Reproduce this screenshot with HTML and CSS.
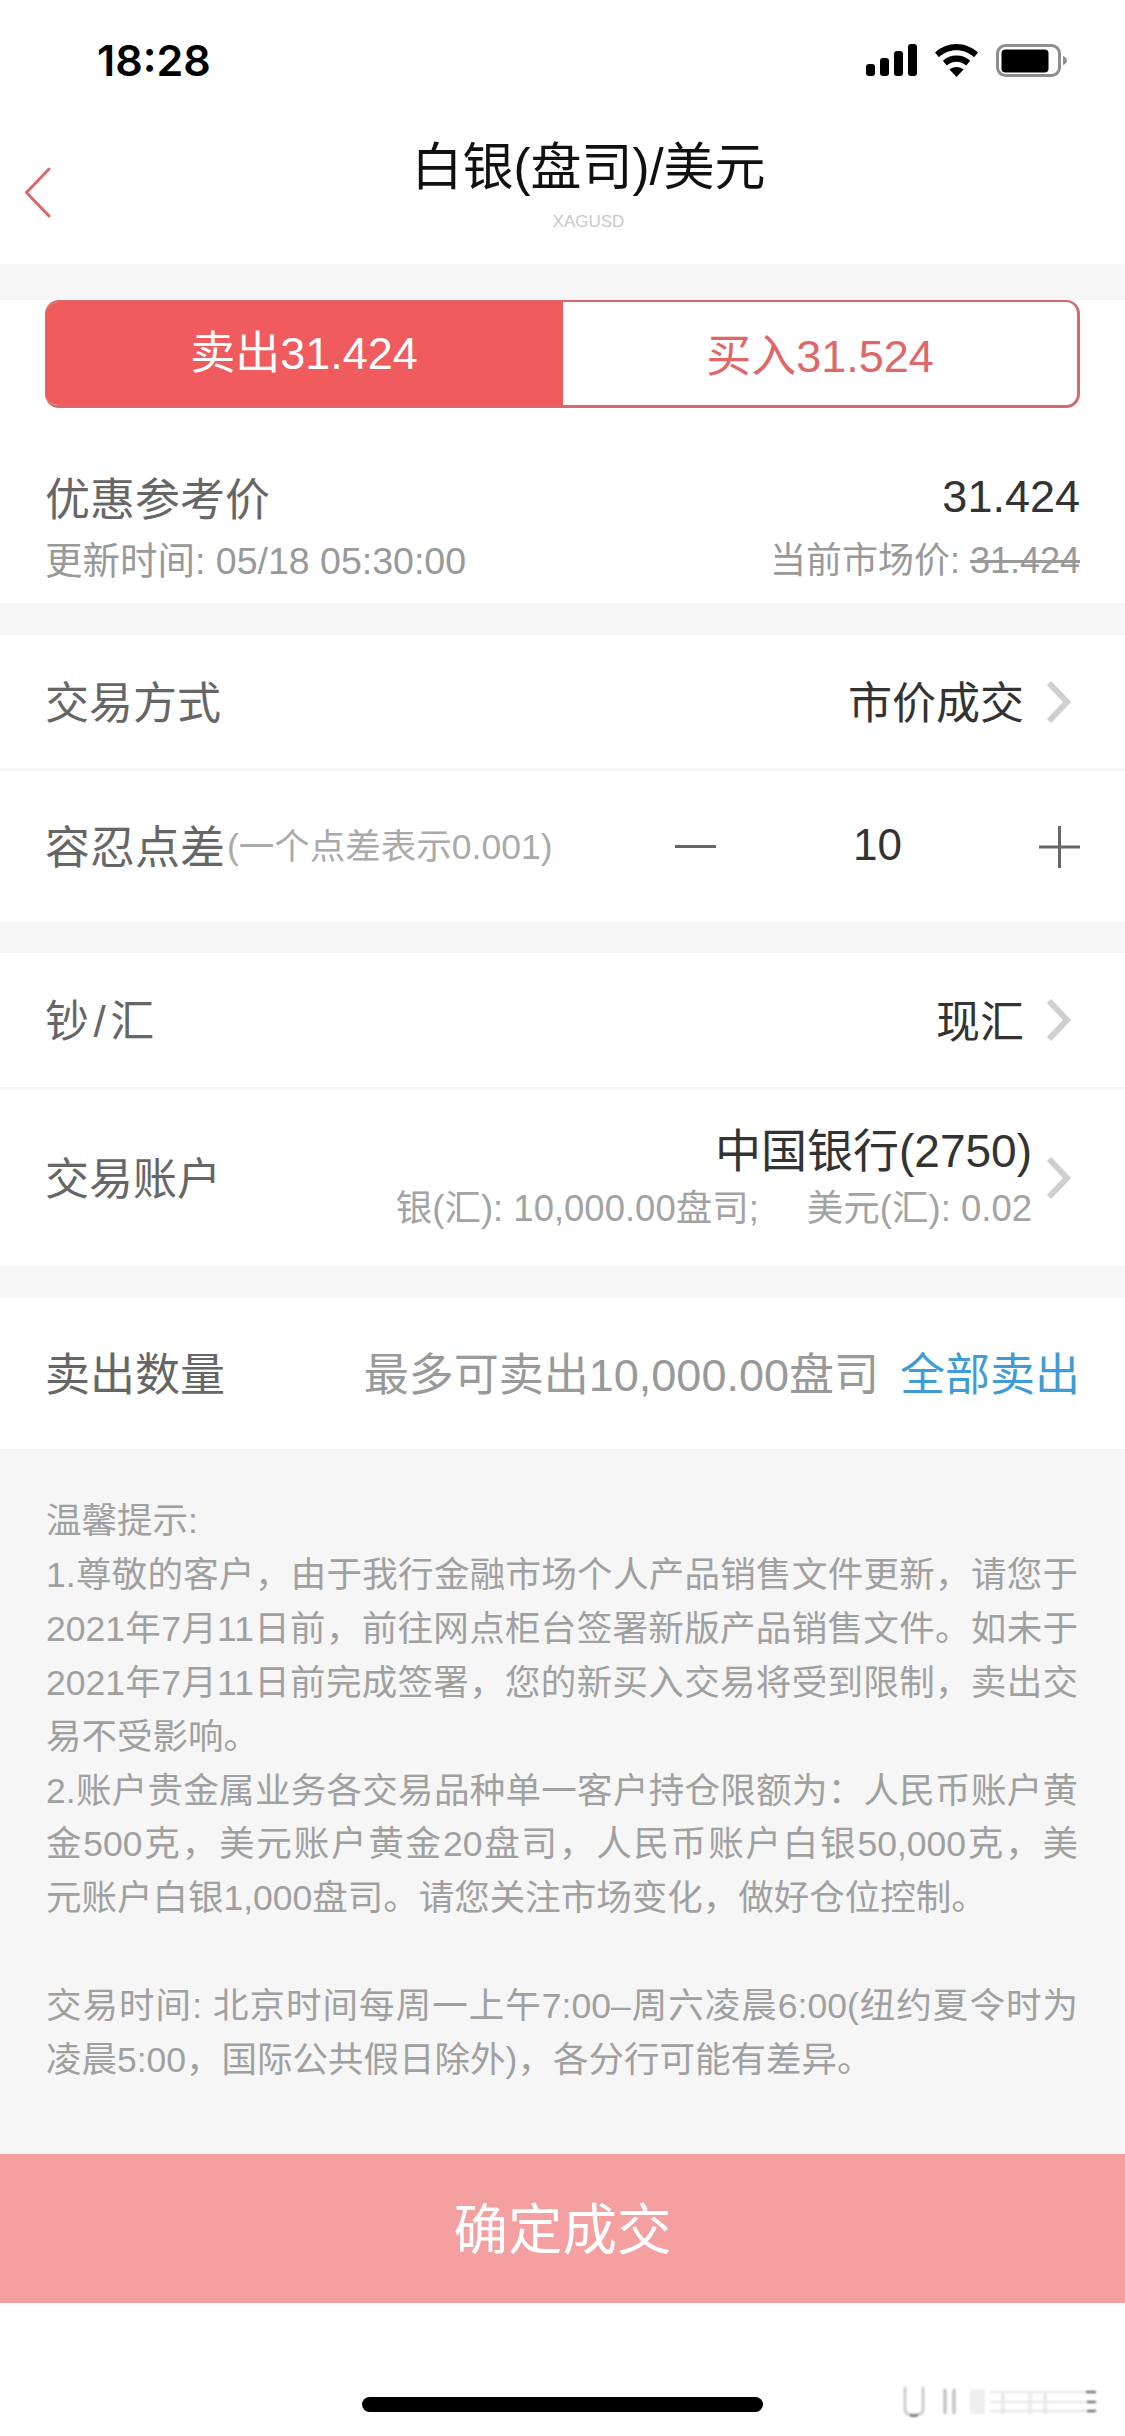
FILE: index.html
```html
<!DOCTYPE html>
<html lang="zh-CN">
<head>
<meta charset="utf-8">
<title>白银(盘司)/美元</title>
<link rel="stylesheet" href="styles.css">
</head>
<body>
<div class="page">
  <header class="header">
    <div class="status">
      <span class="time">18:28</span>
      <div class="status-icons">
        <svg class="signal" width="51" height="32" viewBox="0 0 51 32"><rect x="0" y="20" width="9" height="12" rx="3"/><rect x="14" y="14" width="9" height="18" rx="3"/><rect x="28" y="7" width="9" height="25" rx="3"/><rect x="42" y="0" width="9" height="32" rx="3"/></svg>
        <svg class="wifi" width="43" height="33" viewBox="0 0 43 33"><path d="M21.5 0C13.5 0 6 3 0 8.5l4 4.7C9 8.7 15 6.3 21.5 6.3S34 8.700 39 13.200l4-4.700C37 3 29.500 0 21.500 0Z"/><path d="M21.500 11.500c-5.200 0-10 1.900-13.700 5.300l4 4.700c2.700-2.300 6.100-3.700 9.700-3.700s7 1.400 9.700 3.700l4-4.700c-3.700-3.400-8.500-5.300-13.700-5.300Z"/><path d="M21.500 23c-2.800 0-5.200.9-7 2.500l7 7.500 7-7.500c-1.800-1.600-4.200-2.500-7-2.500Z"/></svg>
        <svg class="battery" width="71" height="33" viewBox="0 0 71 33"><rect x="1.500" y="1.500" width="62" height="30" rx="8" fill="none" stroke="#8e8e8e" stroke-width="3"/><rect x="5.500" y="5.500" width="47" height="23" rx="4"/><path d="M67 12c2.500 1 4 2.500 4 4.500s-1.500 3.500-4 4.500Z" fill="#8e8e8e"/></svg>
      </div>
    </div>
    <div class="nav">
      <svg class="back" width="27" height="51" viewBox="0 0 27 51"><path d="M25 2 2.500 25.500 25 49" fill="none" stroke="#d9696a" stroke-width="3" stroke-linecap="round" stroke-linejoin="round"/></svg>
      <div class="nav-title">
        <h1 class="title">白银(盘司)/美元</h1>
        <div class="subtitle">XAGUSD</div>
      </div>
    </div>
  </header>

  <section class="card quote">
    <div class="segment">
      <div class="seg seg-sell">卖出31.424</div>
      <div class="seg seg-buy">买入31.524</div>
    </div>
    <div class="ref">
      <div class="ref-line ref-main"><span class="label label-lg">优惠参考价</span><span class="value value-lg">31.424</span></div>
      <div class="ref-line ref-sub"><span class="updated">更新时间: 05/18 05:30:00</span><span class="market">当前市场价: <s>31.424</s></span></div>
    </div>
  </section>

  <section class="card card-tight">
    <div class="row row-a"><span class="label">交易方式</span><div class="right"><span class="value">市价成交</span><svg class="chev" width="27" height="46" viewBox="0 0 27 46"><path d="M5 4 23 23 5 42" fill="none" stroke="#cfcfcf" stroke-width="6"/></svg></div></div>
    <div class="row row-b">
      <div class="label-group"><span class="label label-lg">容忍点差</span><span class="hint">(一个点差表示0.001)</span></div>
      <div class="stepper">
        <span class="minus"></span>
        <span class="value">10</span>
        <svg width="41" height="42" viewBox="0 0 41 42"><path d="M0 21H41M20.500 0V42" stroke="#666" stroke-width="3"/></svg>
      </div>
    </div>
  </section>

  <section class="card">
    <div class="row row-c"><span class="label label-spaced">钞/汇</span><div class="right"><span class="value">现汇</span><svg class="chev" width="27" height="46" viewBox="0 0 27 46"><path d="M5 4 23 23 5 42" fill="none" stroke="#cfcfcf" stroke-width="6"/></svg></div></div>
    <div class="row row-d">
      <span class="label">交易账户</span>
      <div class="right">
        <div class="account">
          <div class="value value-account">中国银行(2750)</div>
          <div class="balances"><span>银(汇): 10,000.00盘司;</span><span>美元(汇): 0.02</span></div>
        </div>
        <svg class="chev chev-tight" width="27" height="46" viewBox="0 0 27 46"><path d="M5 4 23 23 5 42" fill="none" stroke="#cfcfcf" stroke-width="6"/></svg>
      </div>
    </div>
  </section>

  <section class="card">
    <div class="row row-e"><span class="label label-lg">卖出数量</span><div class="right-qty"><span class="max">最多可卖出10,000.00盘司</span><span class="all">全部卖出</span></div></div>
  </section>

  <section class="notes">
    <div class="last">温馨提示:</div>
    <div class="full">1.尊敬的客户，由于我行金融市场个人产品销售文件更新，请您于</div>
    <div class="full">2021年7月11日前，前往网点柜台签署新版产品销售文件。如未于</div>
    <div class="full">2021年7月11日前完成签署，您的新买入交易将受到限制，卖出交</div>
    <div class="last">易不受影响。</div>
    <div class="full">2.账户贵金属业务各交易品种单一客户持仓限额为：人民币账户黄</div>
    <div class="full">金500克，美元账户黄金20盘司，人民币账户白银50,000克，美</div>
    <div class="last">元账户白银1,000盘司。请您关注市场变化，做好仓位控制。</div>
    <div class="last blank">&nbsp;</div>
    <div class="full">交易时间: 北京时间每周一上午7:00–周六凌晨6:00(纽约夏令时为</div>
    <div class="last">凌晨5:00，国际公共假日除外)，各分行可能有差异。</div>
  </section>

  <button class="confirm" type="button">确定成交</button>

  <footer class="footer">
    <div class="home"></div>
    <svg class="smudge" width="220" height="40" viewBox="0 0 220 40"><g fill="none"><path d="M5 4V27Q5 32 14 32T23 27V4" stroke="#c4c4c4" stroke-width="2.500"/><path d="M10 32Q14 34 18 32" stroke="#333" stroke-width="1.500"/><path d="M45 6V31M54 6V31" stroke="#bbb" stroke-width="3"/><path d="M103 8V31M130 8V31M145 8V31" stroke="#e8e8e8" stroke-width="3"/><path d="M90 9H192M90 19H192M90 28H192" stroke="#e6e6e6" stroke-width="2"/><path d="M186 9H196M187 19H196M187 28H196" stroke="#555" stroke-width="2"/></g><rect x="70" y="6" width="15" height="25" fill="#efefef"/></svg>
  </footer>
</div>
</body>
</html>
```
FILE: styles.css
```css
* { box-sizing: border-box; }
html, body { margin: 0; padding: 0; }
body {
  background: #fff;
  font-family: "Liberation Sans", "Noto Sans CJK SC", sans-serif;
  color: #333;
}
.page { width: 1125px; height: 2436px; overflow: hidden; display: flex; flex-direction: column; background: #f6f6f6; }

.header { height: 264px; background: #fff; display: flex; flex-direction: column; }
.status { height: 120px; display: flex; justify-content: space-between; align-items: center; padding: 0 58px 0 97px; }
.time { font-family: Inter, "Liberation Sans", sans-serif; font-weight: 600; font-size: 43px; color: #000; }
.status-icons { display: flex; align-items: center; gap: 18px; }
.status-icons svg { display: block; fill: #000; }
.nav { flex: 1; display: flex; padding-left: 24px; }
.back { align-self: center; flex: none; }
.nav-title { flex: 1; padding: 18px 0 0 1px; text-align: center; }
.title { margin: 0; font-size: 51px; line-height: 60px; font-weight: 400; color: #111; }
.subtitle { margin-top: 12px; font-size: 17px; line-height: 24px; color: #c8c8c8; }

.card { background: #fff; margin-bottom: 32px; }
.card-tight { margin-bottom: 31px; }
.quote { margin-top: 36px; height: 303px; padding: 0 45px; }
.segment { height: 108px; display: flex; border-radius: 14px; overflow: hidden; border: 3px solid #d46a6b; border-left: 0; border-top-width: 2px; }
.seg { flex: 1; display: flex; align-items: center; justify-content: center; font-size: 45px; }
.seg-sell { flex: 0 0 518px; background: #f05b5e; color: #fff; padding-bottom: 10px; margin: -2px 0 -3px; }
.seg-buy { color: #e06768; padding-bottom: 3px; }
.ref { padding-top: 60px; }
.ref-line { display: flex; justify-content: space-between; align-items: center; }
.ref-main { height: 60px; }
.ref-sub { height: 50px; margin-top: 4px; color: #999; }
.updated { font-size: 37.500px; }
.market { font-size: 36px; }
.label { font-size: 44px; color: #666; padding-bottom: 4px; }
.label-lg { font-size: 45px; }
.label-spaced { letter-spacing: 4.500px; }
.value { font-size: 44px; color: #333; padding-bottom: 3px; }
.value-lg { font-size: 45px; }
.value-account { font-size: 46px; padding-bottom: 0; }

.row { display: flex; align-items: center; justify-content: space-between; padding: 0 45px; }
.row + .row { border-top: 3px solid #f6f6f6; }
.row-a { height: 133px; }
.row-b { height: 154px; }
.row-c { height: 134px; }
.row-d { height: 179px; }
.row-e { height: 151px; }
.right { display: flex; align-items: center; }
.chev { display: block; margin: 0 9px 0 20px; flex: none; }
.chev-tight { margin-left: 12px; }
.label-group { display: flex; align-items: center; }
.hint { font-size: 35.500px; color: #aaa; margin-left: 2px; padding-bottom: 6px; }
.stepper { width: 405px; display: flex; align-items: center; justify-content: space-between; }
.stepper svg { display: block; }
.minus { width: 41px; height: 3px; background: #666; }

.account { text-align: right; margin-top: 1px; }
.account .value { line-height: 54px; }
.balances { display: flex; justify-content: flex-end; gap: 48px; margin-top: 6px; font-size: 36.500px; line-height: 50px; color: #a3a3a3; }

.right-qty { display: flex; align-items: center; gap: 21px; font-size: 45px; padding-bottom: 4px; }
.max { color: #999; }
.all { color: #3f9cd6; }

.notes { flex: 1; margin-top: -32px; padding: 46px 47px 0 46px; font-size: 35.500px; line-height: 53.900px; color: #a0a0a0; }
.notes div { white-space: nowrap; }
.notes .full { text-align: justify; text-align-last: justify; }

.confirm { display: block; width: 100%; height: 149px; border: 0; padding: 0 0 6px; background: #f5a0a0; color: #fff; font: inherit; font-size: 54.500px; }

.footer { position: relative; height: 133px; background: #fff; padding-top: 94px; }
.home { width: 401px; height: 15px; margin: 0 auto; border-radius: 8px; background: #000; }
.smudge { position: absolute; left: 900px; top: 80px; filter: blur(0.8px); }
```
